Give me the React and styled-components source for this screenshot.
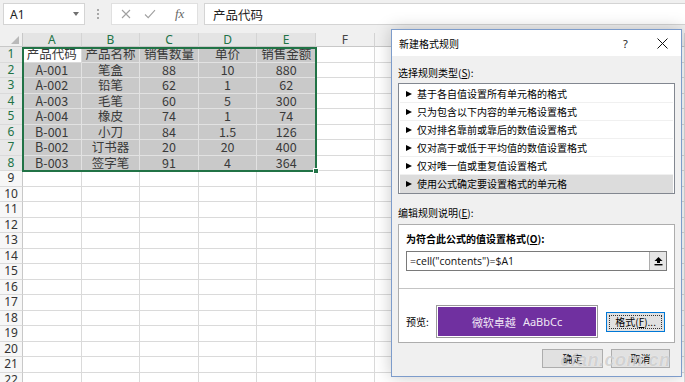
import React from 'react';
import styled, { createGlobalStyle } from 'styled-components';

const GlobalStyle = createGlobalStyle`
  html, body { margin: 0; padding: 0; background: #fff; }
  body { font-family: "Noto Sans CJK SC", "Noto Sans", sans-serif; }
  * { box-sizing: border-box; }
`;

const Screen = styled.div`
  position: relative;
  width: 685px;
  height: 382px;
  overflow: hidden;
  background: #fff;
`;

/* ---------- formula bar ---------- */
const TopBar = styled.div`
  height: 33px;
  background: #f0f0f0;
  display: flex;
  align-items: flex-start;
  padding: 3px 0 0 3px;
`;

const NameBox = styled.div`
  width: 82px;
  height: 22px;
  background: #fff;
  border: 1px solid #d4d4d4;
  display: flex;
  align-items: center;
  justify-content: space-between;
  padding: 0 5px 0 6px;
  font-family: "Noto Sans", sans-serif;
  font-size: 12px;
  color: #222;
`;

const DropTri = styled.span`
  width: 0;
  height: 0;
  border-left: 3.5px solid transparent;
  border-right: 3.5px solid transparent;
  border-top: 4px solid #707070;
`;

const Grip = styled.div`
  width: 26px;
  height: 22px;
  display: flex;
  flex-direction: column;
  align-items: center;
  justify-content: center;
  gap: 2px;
  span { width: 2px; height: 2px; background: #a8a8a8; }
`;

const IconBox = styled.div`
  width: 87px;
  height: 22px;
  background: #fff;
  border: 1px solid #e0e0e0;
  display: flex;
  align-items: center;
  padding-left: 9px;
  gap: 13px;
`;

const Fx = styled.span`
  font-family: "Liberation Serif", serif;
  font-style: italic;
  font-size: 13px;
  color: #666;
  margin-left: 6px;
`;

const FormulaInput = styled.div`
  flex: 1;
  height: 22px;
  margin-left: 6px;
  background: #fff;
  border: 1px solid #d4d4d4;
  border-right: none;
  display: flex;
  align-items: center;
  padding-left: 8px;
  font-size: 12.5px;
  color: #222;
`;

/* ---------- sheet ---------- */
const Sheet = styled.div`
  position: relative;
  display: grid;
  grid-template-columns: 23px repeat(6, 58.6px) 1fr;
  grid-template-rows: 14px repeat(22, 15.5px);
`;

const Corner = styled.div`
  background: #f0f0f0;
  border-right: 1px solid #c8c8c8;
  border-bottom: 1px solid #c8c8c8;
  position: relative;
  &::after {
    content: '';
    position: absolute;
    right: 3px;
    bottom: 2px;
    border-left: 8px solid transparent;
    border-bottom: 8px solid #b9b9b9;
  }
`;

const ColHead = styled.div`
  background: ${p => (p.$sel ? '#e4e4e4' : '#f0f0f0')};
  color: ${p => (p.$sel ? '#217346' : '#444')};
  border-right: 1px solid #d4d4d4;
  border-bottom: 1px solid #c8c8c8;
  font-family: "Noto Sans", sans-serif;
  font-size: 12px;
  line-height: 1;
  display: flex;
  align-items: center;
  justify-content: center;
`;

const RowHead = styled.div`
  background: ${p => (p.$sel ? '#e8e8e8' : '#f7f7f7')};
  color: ${p => (p.$sel ? '#217346' : '#333')};
  border-right: 1px solid #c8c8c8;
  border-bottom: 1px solid #dadada;
  font-family: "Noto Sans", sans-serif;
  font-size: 12px;
  line-height: 1;
  display: flex;
  align-items: center;
  justify-content: center;
`;

const Cell = styled.div`
  background: ${p => (p.$sel ? '#c9c9c9' : '#fff')};
  border-right: 1px solid ${p => (p.$sel ? '#e2e2e2' : '#dadada')};
  border-bottom: 1px solid ${p => (p.$sel ? '#e2e2e2' : '#dadada')};
  font-size: 12.5px;
  line-height: 1;
  color: #3a3a3a;
  display: flex;
  align-items: center;
  justify-content: center;
  white-space: nowrap;
`;

const Selection = styled.div`
  position: absolute;
  left: 22px;
  top: 13.5px;
  width: 295px;
  height: 125px;
  border: 2px solid #217346;
  pointer-events: none;
`;

const FillHandle = styled.div`
  position: absolute;
  right: -4px;
  bottom: -4px;
  width: 6px;
  height: 6px;
  background: #217346;
  border: 1px solid #fff;
`;

/* ---------- dialog ---------- */
const Dialog = styled.div`
  position: absolute;
  left: 391px;
  top: 29px;
  width: 291px;
  height: 348px;
  background: #f0f0f0;
  border: 1px solid #7d9ccb;
  box-shadow: 0 0 16px rgba(0, 0, 0, 0.22);
  display: flex;
  flex-direction: column;
  font-family: "Noto Sans CJK SC", sans-serif;
  font-size: 10px;
  color: #000;
`;

const TitleBar = styled.div`
  height: 26px;
  flex: none;
  background: #fff;
  display: flex;
  align-items: center;
  padding-left: 7px;
`;

const TitleText = styled.div`
  flex: 1;
  font-size: 10px;
`;

const TitleBtn = styled.div`
  width: 37px;
  height: 26px;
  display: flex;
  align-items: center;
  justify-content: center;
  font-family: "Noto Sans", sans-serif;
  font-size: 11px;
  color: #222;
`;

const Body = styled.div`
  flex: 1;
  display: flex;
  flex-direction: column;
  padding: 0 6px;
`;

const Label = styled.div`
  height: 14px;
  line-height: 14px;
  margin: ${p => p.$m};
  u { text-decoration: underline; }
`;

const ListBox = styled.div`
  background: #fff;
  border: 1px solid #828790;
  padding: 1px 1px 0;
  display: flex;
  flex-direction: column;
`;

const ListItem = styled.div`
  height: 18px;
  display: flex;
  align-items: center;
  padding-left: 6px;
  gap: 5px;
  background: ${p => (p.$sel ? '#dcdcdc' : '#fff')};
  border-bottom: 1px solid ${p => (p.$last ? 'transparent' : '#f0f0f0')};
`;

const Tri = styled.span`
  width: 0;
  height: 0;
  border-top: 3.5px solid transparent;
  border-bottom: 3.5px solid transparent;
  border-left: 6px solid #000;
`;

const DescBox = styled.div`
  background: #fff;
  border: 1px solid #adadad;
  display: flex;
  flex-direction: column;
`;

const FormulaSection = styled.div`
  padding: 7px 7px 17px 7px;
  border-bottom: 1px solid #c4c4c4;
`;

const BoldLabel = styled.div`
  font-weight: 700;
  height: 14px;
  line-height: 14px;
  margin-bottom: 5px;
  u { text-decoration: underline; }
`;

const RuleInput = styled.div`
  height: 20px;
  border: 1px solid #7a7a7a;
  display: flex;
  align-items: stretch;
`;

const RuleText = styled.div`
  flex: 1;
  display: flex;
  align-items: center;
  padding-left: 3px;
  font-family: "Open Sans", "Noto Sans", sans-serif;
  font-size: 10.5px;
  color: #111;
`;

const CollapseBtn = styled.div`
  width: 17px;
  background: #e6e6e6;
  border-left: 1px solid #adadad;
  display: flex;
  align-items: center;
  justify-content: center;
`;

const PreviewSection = styled.div`
  display: flex;
  align-items: center;
  padding: 16px 9px 4px 7px;
`;

const PreviewLabel = styled.div`
  width: 30px;
`;

const PreviewFrame = styled.div`
  width: 163px;
  height: 33px;
  border: 1px solid #9a9a9a;
  padding: 1px;
  background: #fff;
`;

const PreviewFill = styled.div`
  height: 100%;
  background: #7030a0;
  color: #efe6f5;
  font-size: 11px;
  display: flex;
  align-items: center;
  justify-content: center;
  gap: 7px;
  span { font-family: "Noto Sans", sans-serif; font-size: 11px; }
`;

const Button = styled.div`
  width: ${p => p.$w}px;
  height: ${p => p.$h}px;
  margin-left: ${p => p.$ml || 0}px;
  background: #e1e1e1;
  border: 1px solid ${p => (p.$focus ? '#0078d7' : '#adadad')};
  display: flex;
  align-items: center;
  justify-content: center;
  position: relative;
  font-size: 10px;
  color: #000;
  ${p =>
    p.$focus &&
    `&::after {
      content: '';
      position: absolute;
      inset: 2px;
      border: 1px dotted #333;
    }`}
`;

const ButtonRow = styled.div`
  display: flex;
  justify-content: flex-end;
  margin-top: 6px;
  padding-right: 5px;
`;

const Watermark = styled.div`
  position: absolute;
  left: 560px;
  top: 350px;
  font-family: "Liberation Sans", sans-serif;
  font-style: italic;
  font-weight: 700;
  font-size: 18px;
  line-height: 20px;
  letter-spacing: 0.5px;
  color: rgba(130, 130, 130, 0.32);
  text-shadow: 0 0 1px rgba(255, 255, 255, 0.8);
  pointer-events: none;
`;

const cols = ['A', 'B', 'C', 'D', 'E', 'F', 'G'];
const data = [
  ['产品代码', '产品名称', '销售数量', '单价', '销售金额'],
  ['A-001', '笔盒', '88', '10', '880'],
  ['A-002', '铅笔', '62', '1', '62'],
  ['A-003', '毛笔', '60', '5', '300'],
  ['A-004', '橡皮', '74', '1', '74'],
  ['B-001', '小刀', '84', '1.5', '126'],
  ['B-002', '订书器', '20', '20', '400'],
  ['B-003', '签字笔', '91', '4', '364'],
];

const rules = [
  '基于各自值设置所有单元格的格式',
  '只为包含以下内容的单元格设置格式',
  '仅对排名靠前或靠后的数值设置格式',
  '仅对高于或低于平均值的数值设置格式',
  '仅对唯一值或重复值设置格式',
  '使用公式确定要设置格式的单元格',
];

export default function App() {
  const rows = [];
  for (let r = 1; r <= 22; r++) {
    const inData = r <= 8;
    rows.push(
      <RowHead key={`rh${r}`} $sel={inData}>
        {r}
      </RowHead>
    );
    cols.forEach((c, ci) => {
      const sel = inData && ci < 5 && !(r === 1 && ci === 0);
      const text = inData && ci < 5 ? data[r - 1][ci] : '';
      rows.push(
        <Cell key={`${c}${r}`} $sel={sel}>
          {text}
        </Cell>
      );
    });
  }

  return (
    <Screen>
      <GlobalStyle />
      <TopBar>
        <NameBox>
          A1
          <DropTri />
        </NameBox>
        <Grip>
          <span />
          <span />
          <span />
        </Grip>
        <IconBox>
          <svg width="10" height="10" viewBox="0 0 10 10">
            <path d="M1 1L9 9M9 1L1 9" stroke="#a0a0a0" strokeWidth="1.1" fill="none" />
          </svg>
          <svg width="12" height="10" viewBox="0 0 12 10">
            <path d="M1 5.5L4.2 8.6L11 1.2" stroke="#a0a0a0" strokeWidth="1.1" fill="none" />
          </svg>
          <Fx>fx</Fx>
        </IconBox>
        <FormulaInput>产品代码</FormulaInput>
      </TopBar>

      <Sheet>
        <Corner />
        {cols.map((c, i) => (
          <ColHead key={c} $sel={i < 5}>
            {c}
          </ColHead>
        ))}
        {rows}
        <Selection>
          <FillHandle />
        </Selection>
      </Sheet>

      <Dialog>
        <TitleBar>
          <TitleText>新建格式规则</TitleText>
          <TitleBtn>?</TitleBtn>
          <TitleBtn>
            <svg width="11" height="11" viewBox="0 0 11 11">
              <path d="M0.5 0.5L10.5 10.5M10.5 0.5L0.5 10.5" stroke="#111" strokeWidth="1" fill="none" />
            </svg>
          </TitleBtn>
        </TitleBar>
        <Body>
          <Label $m="10px 0 3px">
            选择规则类型(<u>S</u>):
          </Label>
          <ListBox>
            {rules.map((t, i) => (
              <ListItem key={t} $sel={i === 5} $last={i === 5}>
                <Tri />
                {t}
              </ListItem>
            ))}
          </ListBox>
          <Label $m="12px 0 4px">
            编辑规则说明(<u>E</u>):
          </Label>
          <DescBox>
            <FormulaSection>
              <BoldLabel>
                为符合此公式的值设置格式(<u>O</u>):
              </BoldLabel>
              <RuleInput>
                <RuleText>=cell("contents")=$A1</RuleText>
                <CollapseBtn>
                  <svg width="9" height="10" viewBox="0 0 9 10">
                    <path d="M4.5 1L8.5 5H6V7H3V5H0.5Z" fill="#000" />
                    <rect x="0.5" y="8" width="8" height="1.4" fill="#000" />
                  </svg>
                </CollapseBtn>
              </RuleInput>
            </FormulaSection>
            <PreviewSection>
              <PreviewLabel>预览:</PreviewLabel>
              <PreviewFrame>
                <PreviewFill>
                  微软卓越<span>AaBbCc</span>
                </PreviewFill>
              </PreviewFrame>
              <Button $w={59} $h={20} $ml={8} $focus>
                格式(<u>F</u>)...
              </Button>
            </PreviewSection>
          </DescBox>
          <ButtonRow>
            <Button $w={61} $h={19}>
              确定
            </Button>
            <Button $w={59} $h={19} $ml={8}>
              取消
            </Button>
          </ButtonRow>
        </Body>
      </Dialog>
      <Watermark>cfan.com.cn</Watermark>
    </Screen>
  );
}
